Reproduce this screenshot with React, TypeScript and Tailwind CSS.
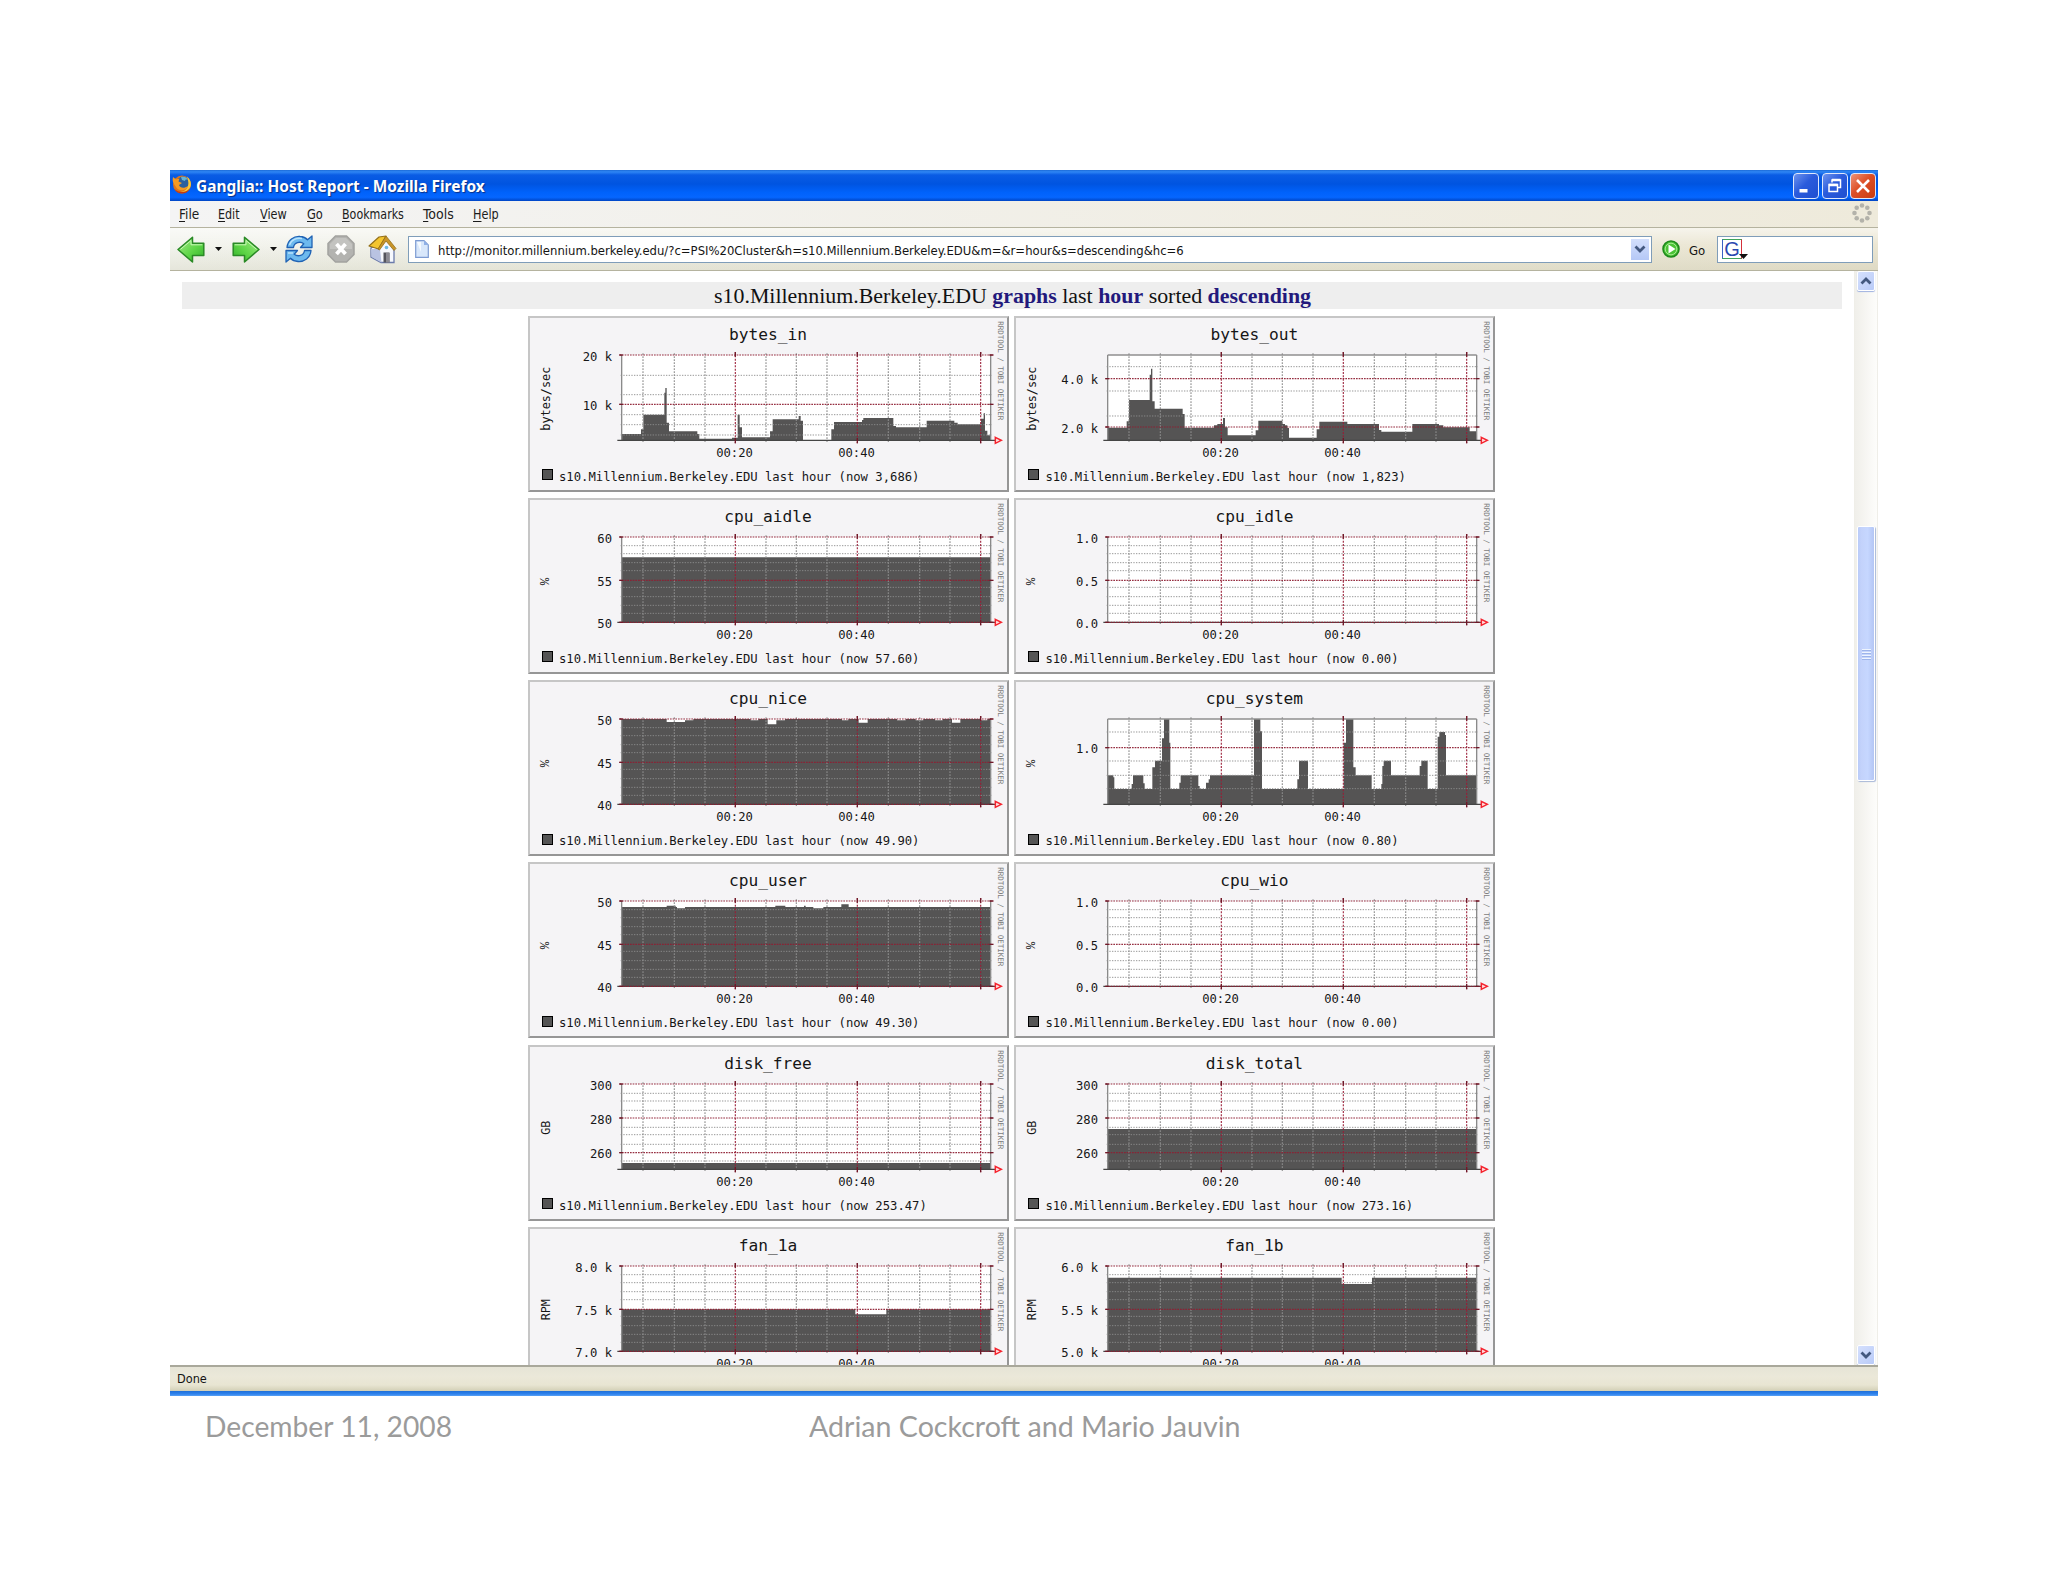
import { useLayoutEffect, useRef, type ReactNode } from "react";

type Step = [number, number];

interface Graph {
  name: string;
  unit: string;
  now: string;
  major: [number, string][];
  minor: number[];
  steps: Step[];
}

const BOTTOM = 373;
const LEFT = 281;
const RIGHT = 1388;

const gridTen = [143, 167, 194, 218, 268, 296, 322, 346];
const pct = (a: string, b: string, c: string): [number, string][] => [
  [117, a],
  [247, b],
  [373, c],
];

const graphs: Graph[] = [
  {
    name: "bytes_in",
    unit: "bytes/sec",
    now: "3,686",
    major: [[117, "20 k"], [265, "10 k"]],
    minor: [178, 236, 296, 326, 357],
    steps: [[281, 354], [339, 340], [346, 296], [409, 230], [412, 216], [416, 320], [423, 346], [508, 354], [514, 368], [612, 365], [629, 296], [635, 334], [642, 364], [726, 346], [734, 310], [812, 300], [818, 314], [825, 372], [910, 340], [918, 318], [1002, 312], [1006, 306], [1096, 330], [1104, 334], [1196, 314], [1279, 320], [1289, 325], [1359, 308], [1367, 292], [1371, 344], [1378, 358], [1386, 372]],
  },
  {
    name: "bytes_out",
    unit: "bytes/sec",
    now: "1,823",
    major: [[188, "4.0 k"], [333, "2.0 k"]],
    minor: [152, 225, 300],
    steps: [[281, 335], [338, 316], [345, 252], [407, 176], [411, 158], [415, 256], [422, 278], [506, 294], [512, 335], [600, 328], [610, 324], [627, 306], [633, 334], [641, 358], [725, 343], [733, 314], [805, 324], [813, 328], [820, 336], [825, 365], [908, 340], [916, 317], [1000, 324], [1095, 342], [1102, 347], [1195, 324], [1275, 328], [1288, 334], [1367, 346]],
  },
  { name: "cpu_aidle", unit: "%", now: "57.60", major: pct("60", "55", "50"), minor: gridTen, steps: [[281, 178]] },
  { name: "cpu_idle", unit: "%", now: "0.00", major: pct("1.0", "0.5", "0.0"), minor: gridTen, steps: [] },
  {
    name: "cpu_nice",
    unit: "%",
    now: "49.90",
    major: pct("50", "45", "40"),
    minor: gridTen,
    steps: [[281, 117], [416, 126], [471, 121], [496, 117], [668, 121], [691, 117], [719, 133], [745, 121], [771, 117], [942, 121], [961, 117], [992, 128], [1019, 117], [1107, 121], [1133, 117], [1163, 121], [1186, 117], [1221, 121], [1244, 117], [1272, 128], [1297, 117], [1359, 121], [1378, 117]],
  },
  {
    name: "cpu_system",
    unit: "%",
    now: "0.80",
    major: [[203, "1.0"]],
    minor: [156, 243, 286, 326],
    steps: [[281, 286], [298, 292], [301, 327], [353, 312], [357, 286], [388, 310], [392, 327], [415, 262], [423, 242], [444, 175], [450, 117], [466, 188], [469, 327], [496, 308], [500, 286], [553, 318], [557, 327], [576, 308], [584, 298], [588, 286], [720, 117], [739, 154], [744, 327], [850, 298], [855, 242], [882, 327], [989, 188], [996, 117], [1018, 262], [1025, 286], [1073, 327], [1102, 312], [1105, 258], [1109, 242], [1131, 286], [1217, 258], [1222, 242], [1241, 327], [1271, 170], [1276, 156], [1293, 165], [1296, 286]],
  },
  {
    name: "cpu_user",
    unit: "%",
    now: "49.30",
    major: pct("50", "45", "40"),
    minor: gridTen,
    steps: [[281, 135], [416, 131], [443, 135], [447, 139], [471, 135], [742, 131], [772, 135], [828, 131], [833, 135], [856, 139], [886, 135], [940, 127], [962, 135]],
  },
  { name: "cpu_wio", unit: "%", now: "0.00", major: pct("1.0", "0.5", "0.0"), minor: gridTen, steps: [] },
  {
    name: "disk_free",
    unit: "GB",
    now: "253.47",
    major: [[117, "300"], [219, "280"], [323, "260"]],
    minor: [145, 168, 196, 247, 269, 298, 348],
    steps: [[281, 354]],
  },
  {
    name: "disk_total",
    unit: "GB",
    now: "273.16",
    major: [[117, "300"], [219, "280"], [323, "260"]],
    minor: [145, 168, 196, 247, 269, 298, 348],
    steps: [[281, 252]],
  },
  { name: "fan_1a", unit: "RPM", now: "7,500", major: pct("8.0 k", "7.5 k", "7.0 k"), minor: gridTen, steps: [[281, 247], [982, 262], [1075, 247]] },
  { name: "fan_1b", unit: "RPM", now: "5,850", major: pct("6.0 k", "5.5 k", "5.0 k"), minor: gridTen, steps: [[281, 152], [983, 171], [1074, 152]] },
];

const minorX = [345, 439, 531, 714, 805, 897, 1081, 1175, 1266];
const majorX = [622, 988, 1358];

function areaPath(steps: Step[]): string {
  if (!steps.length) return "";
  let d = `M${LEFT} ${BOTTOM}`;
  steps.forEach(([x, y], i) => {
    const next = i + 1 < steps.length ? steps[i + 1][0] : RIGHT;
    d += `L${x} ${y}L${next} ${y}`;
  });
  return `${d}L${RIGHT} ${BOTTOM}Z`;
}

/* Stretches a single line of text horizontally to a given width. */
function Fit({ width, className = "", children }: { width: number; className?: string; children: ReactNode }) {
  const ref = useRef<HTMLSpanElement>(null);
  useLayoutEffect(() => {
    const el = ref.current;
    if (!el) return;
    el.style.transform = `scaleX(${width / el.offsetWidth})`;
  }, [width]);
  return (
    <span className={`block shrink-0 whitespace-nowrap ${className}`} style={{ width }}>
      <span ref={ref} className="inline-block origin-left">
        {children}
      </span>
    </span>
  );
}

const ui = "font-['DejaVu_Sans_Condensed','DejaVu_Sans',sans-serif]";

function Chart({ g }: { g: Graph }) {
  const isMajor = (y: number) => g.major.some(([m]) => m === y);
  const isPercent = g.unit === "%";
  return (
    <svg viewBox="2 30 477 116" width={477} height={116} className="block overflow-visible">
      <g transform="scale(0.33333)">
        <rect x={LEFT} y={117} width={RIGHT - LEFT} height={BOTTOM - 117} fill="#ffffff" />
        <path d={areaPath(g.steps)} fill="#555454" />
        <path d={`M${LEFT} 117V${BOTTOM}M${RIGHT} 117V${BOTTOM}`} stroke="#8a8a8a" strokeWidth={4} fill="none" />
        {!isMajor(117) && <path d={`M${LEFT} 117H${RIGHT}`} stroke="#8f8f8f" strokeWidth={4} />}
        {g.minor.map((y) => (
          <path key={y} d={`M278 ${y}H1391`} stroke="#8e8e8e" strokeWidth={3} strokeDasharray="4 4" opacity={0.9} />
        ))}
        {minorX.map((x) => (
          <path key={x} d={`M${x} 112V378`} stroke="#8e8e8e" strokeWidth={3.6} strokeDasharray="5 4" opacity={0.9} />
        ))}
        <path d={`M268 ${BOTTOM}H1404`} stroke="#454545" strokeWidth={4} />
        {g.major.map(([y]) => (
          <g key={y}>
            <path d={`M274 ${y}H1396`} stroke="#8f1f33" strokeWidth={3.4} strokeDasharray="5 3" opacity={0.92} />
            <path d={`M274 ${y}H284M1384 ${y}H1396`} stroke="#701828" strokeWidth={4} />
          </g>
        ))}
        {majorX.map((x) => (
          <g key={x}>
            <path d={`M${x} 108V382`} stroke="#9a1c36" strokeWidth={3.5} strokeDasharray="6 4" opacity={0.92} />
            <path d={`M${x} 108V122M${x} 366V382`} stroke="#701828" strokeWidth={4} />
          </g>
        ))}
        <path d="M1402 364L1420 373L1402 382Z" fill="#ffdede" stroke="#f5222d" strokeWidth={4.5} />
      </g>
      <g className="font-['DejaVu_Sans_Mono',monospace]" fill="#161616" fontSize={12.2}>
        {g.major.map(([y, label]) => (
          <text key={y} x={84} y={y / 3 + 5.8} textAnchor="end">
            {label}
          </text>
        ))}
        <text x={206.5} y={140.5} textAnchor="middle">00:20</text>
        <text x={328.5} y={140.5} textAnchor="middle">00:40</text>
        <text
          transform={`translate(${isPercent ? 20.5 : 21.8} ${isPercent ? 83.5 : 82.7}) rotate(-90)`}
          textAnchor="middle"
          fontSize={isPercent ? 12.5 : 11.8}
          className={isPercent ? "font-['Liberation_Mono',monospace]" : ""}
        >
          {g.unit}
        </text>
        <text transform="translate(470.3 5.3) rotate(90)" fontSize={7.6} fill="#7c7c7c" textLength={99}>
          RRDTOOL / TOBI OETIKER
        </text>
      </g>
    </svg>
  );
}

function Card({ g }: { g: Graph }) {
  return (
    <div className="h-[176px] w-[481px] border-2 border-t-[#c6c6c6] border-r-[#969696] border-b-[#969696] border-l-[#c6c6c6] bg-[#f5f4f6] font-['DejaVu_Sans_Mono',monospace] text-[#161616]">
      <div className="h-[28px] pt-[5px] pr-[1px] text-center text-[16.2px] leading-[23px]">{g.name}</div>
      <Chart g={g} />
      <div className="flex h-[26px] items-center pl-[12px]">
        <span className="h-[11px] w-[11px] border-[1.5px] border-black bg-[#555]" />
        <span className="ml-[6px] pt-[4px] text-[12.22px] leading-[16px] whitespace-pre">{`s10.Millennium.Berkeley.EDU last hour (now ${g.now})`}</span>
      </div>
    </div>
  );
}

function FirefoxIcon() {
  return (
    <svg width="20" height="19" viewBox="0 0 20 19">
      <circle cx="10" cy="9.500" r="9" fill="#e0761a" />
      <circle cx="11" cy="7.500" r="6" fill="#2c5f9e" />
      <path d="M9 2c3-1 6 0 7 3-2-1-3 0-3 1l-3-1z" fill="#62b5d8" />
      <path d="M1 2l3 2.500 3.500-1-1 3 3.500 1.500-3 2c1 3 5 4 9 1-2 5-9 6-12 1C1 8 0 6 1 2z" fill="#f59a22" />
      <path d="M15 1.500c4 3.500 5.500 8.500 2 12.500-3 4-8 5-12 3 5 1 10-2 11-6 1-3 0-6-1-9.500z" fill="#f6c83c" />
      <path d="M2.500 14c4 4 11 4 15 0-2.500 6-12.500 6-15 0z" fill="#c23a12" />
    </svg>
  );
}

function ArrowIcon({ flip = false }: { flip?: boolean }) {
  return (
    <svg width="28" height="27" viewBox="0 0 28 27" className={flip ? "-scale-x-100" : ""}>
      <defs>
        <linearGradient id="arrow" x1="0" y1="0" x2="1" y2="1">
          <stop offset="0" stopColor="#a8ec8c" />
          <stop offset="0.55" stopColor="#5fd648" />
          <stop offset="1" stopColor="#2fae28" />
        </linearGradient>
      </defs>
      <path d="M1 13.500L15.500 1.200V7.300H26.800V19.500H15.500V26Z" fill="url(#arrow)" stroke="#2a8a26" strokeWidth="1.500" strokeLinejoin="round" />
      <path d="M3.500 13.300L14 4.500V8.800H25.300" fill="none" stroke="#c8f7b6" strokeWidth="1" />
    </svg>
  );
}

function Caret() {
  return (
    <svg width="7" height="4" viewBox="0 0 7 4">
      <path d="M0 0H7L3.500 4Z" fill="#111" />
    </svg>
  );
}

function ReloadIcon() {
  return (
    <svg width="28" height="28" viewBox="0 0 28 28">
      <g fill="#6db9ee" stroke="#1f62b4" strokeWidth="1.300" strokeLinejoin="round">
        <path d="M2 12.500C2.500 5 9 1 15 1.500C18.500 1.700 21 3 22.500 4.700L27 1V12.500H15.500L18.800 8.800C15 5.800 9 7.500 8.500 12.500Z" />
        <path d="M26 15.500C25.500 23 19 27 13 26.500C9.500 26.300 7 25 5.500 23.300L1 27V15.500H12.500L9.200 19.200C13 22.200 19 20.500 19.500 15.500Z" />
      </g>
      <path d="M4.500 10C6 4.500 12 2.500 17 3.500M3 18H8" stroke="#b9e2fb" strokeWidth="1.500" fill="none" />
    </svg>
  );
}

function StopIcon() {
  return (
    <svg width="28" height="28" viewBox="0 0 28 28">
      <path d="M8.500 1H19.500L27 8.500V19.500L19.500 27H8.500L1 19.500V8.500Z" fill="#b3b3b0" stroke="#a2a29f" strokeWidth="1.500" />
      <path d="M9 3H19L25 9V14H3V9Z" fill="#c3c3c0" />
      <path d="M9.500 9L18.500 19M18.500 9L9.500 19" stroke="#ffffff" strokeWidth="3.800" />
    </svg>
  );
}

function HomeIcon() {
  return (
    <svg width="29" height="29" viewBox="0 0 29 29">
      <path d="M3 13V22L13 27.500H26V14L19 5Z" fill="#f6f8fd" stroke="#6b7bab" strokeWidth="1.300" />
      <path d="M3 14L12 14L13.500 27.500L3.500 22Z" fill="#b9c3e2" />
      <path d="M1 11L11 2L18 1L10.500 14Z" fill="#f3c52f" stroke="#94701a" strokeWidth="1.200" strokeLinejoin="round" />
      <path d="M18 1L28 13.500L26 15.500L18 6L11.500 15L10 14Z" fill="#c99528" stroke="#94701a" strokeWidth="0.800" />
      <rect x="15.500" y="17.500" width="6" height="10" fill="#54545c" />
      <rect x="18" y="18" width="3.500" height="9.500" fill="#8b8a92" />
      <circle cx="18.500" cy="12.500" r="1.800" fill="#6cb8e2" />
    </svg>
  );
}

function PageIcon() {
  return (
    <svg width="14" height="18" viewBox="0 0 14 18">
      <path d="M0.700 0.700H9L13.300 5V17.300H0.700Z" fill="#d8e7fb" stroke="#7d9bd2" strokeWidth="1.200" />
      <path d="M9 0.700V5H13.300Z" fill="#8fb0e6" />
      <path d="M2 2H6V12Z" fill="#f5faff" />
    </svg>
  );
}

function Chevron({ up = false }: { up?: boolean }) {
  return (
    <svg width="12" height="8" viewBox="0 0 12 8">
      <path d={up ? "M1.500 6.500L6 2L10.500 6.500" : "M1.500 1.500L6 6L10.500 1.500"} fill="none" stroke="#43587f" strokeWidth="2.800" />
    </svg>
  );
}

function Throbber() {
  return (
    <svg width="20" height="20" viewBox="0 0 20 20" fill="#b3b2aa">
      <circle cx="10" cy="2.500" r="2.300" />
      <circle cx="15.300" cy="4.700" r="2.300" />
      <circle cx="17.500" cy="10" r="2.300" />
      <circle cx="15.300" cy="15.300" r="2.300" />
      <circle cx="10" cy="17.500" r="2.300" />
      <circle cx="4.700" cy="15.300" r="2.300" />
      <circle cx="2.500" cy="10" r="2.300" />
      <circle cx="4.700" cy="4.700" r="2.300" />
    </svg>
  );
}

const winButton = "flex h-[26px] w-[26px] items-center justify-center rounded-[4px] border-[1.5px] border-[#dfe8fb]";

function TitleBar() {
  return (
    <div className="flex h-[31px] items-center bg-[linear-gradient(180deg,#1c6bd8_0%,#2f86f5_6%,#0a5ce4_16%,#0054e0_45%,#0062fb_72%,#0566ff_88%,#0045c4_100%)] pl-[2px] pr-[2px]">
      <span className="-mt-[3px]"><FirefoxIcon /></span>
      <Fit width={289} className="ml-[4px] font-['Noto_Sans','Open_Sans',sans-serif] text-[15.5px] leading-[24px] font-bold text-white [text-shadow:1px_1px_1px_#0a2f86]">
        Ganglia:: Host Report - Mozilla Firefox
      </Fit>
      <div className="ml-auto flex gap-[2.500px]">
        <div className={`${winButton} bg-[linear-gradient(135deg,#6d93ee,#2a5bdc_45%,#1f4fd0)]`}>
          <svg width="18" height="18" viewBox="0 0 18 18">
            <rect x="2.500" y="12" width="8" height="3.500" fill="#fff" />
          </svg>
        </div>
        <div className={`${winButton} bg-[linear-gradient(135deg,#6d93ee,#2a5bdc_45%,#1f4fd0)]`}>
          <svg width="18" height="18" viewBox="0 0 18 18" fill="none" stroke="#fff">
            <path d="M6 5.500V3H14.500V10.500H12" strokeWidth="1.500" />
            <path d="M6 3H14.500" strokeWidth="2.500" />
            <rect x="3" y="7.500" width="8.500" height="7" strokeWidth="1.500" />
            <path d="M3 8H11.500" strokeWidth="2.500" />
          </svg>
        </div>
        <div className={`${winButton} bg-[linear-gradient(135deg,#ee9478,#dd4f26_45%,#c93c13)]`}>
          <svg width="18" height="18" viewBox="0 0 18 18">
            <path d="M3 3L15 15M15 3L3 15" stroke="#fff" strokeWidth="2.600" />
          </svg>
        </div>
      </div>
    </div>
  );
}

const menus: { label: string; width: number; gap: string }[] = [
  { label: "File", width: 20, gap: "mr-[19px]" },
  { label: "Edit", width: 22, gap: "mr-[20px]" },
  { label: "View", width: 27, gap: "mr-[20px]" },
  { label: "Go", width: 16, gap: "mr-[19px]" },
  { label: "Bookmarks", width: 62, gap: "mr-[19px]" },
  { label: "Tools", width: 31, gap: "mr-[19px]" },
  { label: "Help", width: 26, gap: "" },
];

function MenuBar() {
  return (
    <div className={`flex h-[27px] items-center border-b border-[#b5b39f] bg-[linear-gradient(90deg,#f4f4f4,#eeeadb)] pl-[9px] pr-[6px] text-[13.5px] text-[#1b1b1b] ${ui}`}>
      {menus.map((m) => (
        <Fit key={m.label} width={m.width} className={`pt-px ${m.gap}`}>
          <span className="underline underline-offset-2">{m.label[0]}</span>
          {m.label.slice(1)}
        </Fit>
      ))}
      <div className="ml-auto -mt-[2px]">
        <Throbber />
      </div>
    </div>
  );
}

function ToolBar() {
  return (
    <div className={`flex h-[43px] items-center border-b-[1.5px] border-[#b5b39f] bg-[linear-gradient(180deg,rgba(255,255,255,0.55),rgba(255,255,255,0)_40%,rgba(150,150,110,0.15)),linear-gradient(90deg,#f3f4ee,#ebe6d3)] pl-[7px] text-[13px] text-[#141414] ${ui}`}>
      <ArrowIcon />
      <span className="ml-[10px]"><Caret /></span>
      <span className="ml-[10px]"><ArrowIcon flip /></span>
      <span className="ml-[10px]"><Caret /></span>
      <span className="ml-[8px]"><ReloadIcon /></span>
      <span className="ml-[14px]"><StopIcon /></span>
      <span className="ml-[13px]"><HomeIcon /></span>
      <div className="ml-[11px] flex h-[27px] w-[1244px] items-center border-[1.5px] border-[#7f9db9] bg-white pr-[2px] pl-[6px]">
        <PageIcon />
        <Fit width={746} className="ml-[9px] pt-[3px]">
          http://monitor.millennium.berkeley.edu/?c=PSI%20Cluster&amp;h=s10.Millennium.Berkeley.EDU&amp;m=&amp;r=hour&amp;s=descending&amp;hc=6
        </Fit>
        <div className="ml-auto flex h-[21px] w-[18px] items-center justify-center bg-[linear-gradient(180deg,#d3dffc,#b5c8f6)]">
          <Chevron />
        </div>
      </div>
      <svg width="18" height="18" viewBox="0 0 18 18" className="ml-[10px]">
        <circle cx="9" cy="9" r="8" fill="#4cc337" stroke="#1f8a1c" strokeWidth="1.600" />
        <circle cx="9" cy="9" r="5.800" fill="none" stroke="#a4ea90" strokeWidth="1" />
        <path d="M6.500 4.500L13.500 9L6.500 13.500Z" fill="#fff" />
      </svg>
      <Fit width={16} className="ml-[9px] pt-[3px]">Go</Fit>
      <div className="ml-[12px] flex h-[27px] w-[156px] items-center border-[1.5px] border-[#7f9db9] bg-white pl-[4px]">
        <div className="flex h-[20px] w-[20px] items-center justify-center border-[1.5px] border-t-[#3fa35a] border-r-[#d4303a] border-b-[#3fa35a] border-l-[#3a62c4] font-['Liberation_Sans',sans-serif] text-[20px] leading-none text-[#2b48b0]">
          G
        </div>
        <svg width="9" height="5" viewBox="0 0 9 5" className="mt-[14px] -ml-[3px]">
          <path d="M0 0H9L4.500 5Z" fill="#111" />
        </svg>
      </div>
    </div>
  );
}

function ScrollBar() {
  const button = "flex h-[20px] w-[18px] shrink-0 items-center justify-center rounded-[2px] border border-white bg-[linear-gradient(135deg,#d5e0fd,#b9cbf8)] shadow-[0_1px_1px_#9fb2e0]";
  return (
    <div className="flex w-[24px] flex-col items-center border-x border-[#efeee8] bg-[linear-gradient(90deg,#f0efea,#fdfdfb)]">
      <div className={button}><Chevron up /></div>
      <div className="mt-[235px] flex h-[255px] w-[18px] flex-col items-center justify-center gap-[2px] rounded-[2px] border border-white bg-[linear-gradient(90deg,#b9cbf8,#c3d2fb_20%,#c6d7ff_60%,#b4c6f4)] shadow-[1px_1px_1px_#a8b8d8]">
        <span className="h-px w-[9px] bg-[#eef4fe] shadow-[0_1px_0_#9db4ea]" />
        <span className="h-px w-[9px] bg-[#eef4fe] shadow-[0_1px_0_#9db4ea]" />
        <span className="h-px w-[9px] bg-[#eef4fe] shadow-[0_1px_0_#9db4ea]" />
        <span className="h-px w-[9px] bg-[#eef4fe] shadow-[0_1px_0_#9db4ea]" />
      </div>
      <div className={`${button} mt-auto`}><Chevron /></div>
    </div>
  );
}

export default function App() {
  return (
    <div className="h-[1582px] w-[2048px] overflow-hidden bg-white pt-[170px] pl-[170px]">
      <div className="w-[1708px]">
        <TitleBar />
        <MenuBar />
        <ToolBar />
        <div className="flex h-[1094px] overflow-hidden bg-white">
          <div className="flex w-[1684px] flex-col pt-[11px]">
            <div className="ml-[12px] flex h-[27px] w-[1660px] shrink-0 items-center bg-[#eeeeee] pl-[532px]">
              <Fit width={597} className="pt-px font-['Liberation_Serif',serif] text-[20.5px] leading-[27px] text-[#111]">
                s10.Millennium.Berkeley.EDU <b className="text-[#23197c]">graphs</b> last <b className="text-[#23197c]">hour</b> sorted{" "}
                <b className="text-[#23197c]">descending</b>
              </Fit>
            </div>
            <div className="mt-[6.5px] ml-[358px] grid w-[968px] shrink-0 grid-cols-[481px_481px] gap-x-[5.4px] gap-y-[6.3px]">
              {graphs.map((g) => (
                <Card key={g.name} g={g} />
              ))}
            </div>
          </div>
          <ScrollBar />
        </div>
        <div className={`flex h-[26px] items-center border-t-2 border-[#a9a89b] bg-[linear-gradient(180deg,#e6e4d6,#ebe8d9_40%,#e8e5d2_75%,#d2cfb6)] pl-[7px] text-[13px] text-[#141414] ${ui}`}>
          <Fit width={30}>Done</Fit>
        </div>
        <div className="h-[5px] bg-[linear-gradient(180deg,#1f6fd8,#2f83ee_60%,#5aa2f5)]" />
      </div>
      <div className="mt-[13px] flex font-['Lato',sans-serif] text-[28px] leading-[34px] text-[#9b9b9b]">
        <Fit width={247} className="ml-[35px]">December 11, 2008</Fit>
        <Fit width={432} className="ml-[357px]">Adrian Cockcroft and Mario Jauvin</Fit>
      </div>
    </div>
  );
}
